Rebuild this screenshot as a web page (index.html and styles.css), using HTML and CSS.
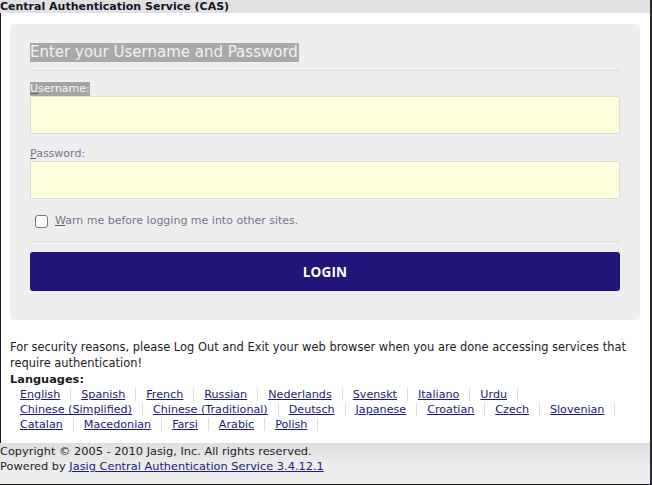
FILE: index.html
```html
<!DOCTYPE html>
<html>
<head>
<meta charset="utf-8">
<link rel="stylesheet" href="styles.css">
</head>
<body>
<div class="frame">
  <div class="header"><h1 class="title">Central Authentication Service (CAS)</h1></div>
  <div class="content">
    <form class="login-box">
      <h2 class="login-heading">Enter your Username and Password</h2>
      <div class="row">
        <label class="lbl lbl-hl" for="username"><span class="ak">U</span>sername:</label>
        <input class="field" id="username" type="text">
      </div>
      <div class="row">
        <label class="lbl" for="password"><span class="ak">P</span>assword:</label>
        <input class="field" id="password" type="password">
      </div>
      <div class="check-row">
        <input class="chk" id="warn" type="checkbox">
        <label class="lbl" for="warn"><span class="ak">W</span>arn me before logging me into other sites.</label>
      </div>
      <button class="btn" type="button">LOGIN</button>
    </form>
    <div class="info">
      <p class="notice">For security reasons, please Log Out and Exit your web browser when you are done accessing services that require authentication!</p>
      <h3 class="lang-title">Languages:</h3>
      <ul class="langs">
        <li><a href="#">English</a></li>
        <li><a href="#">Spanish</a></li>
        <li><a href="#">French</a></li>
        <li><a href="#">Russian</a></li>
        <li><a href="#">Nederlands</a></li>
        <li><a href="#">Svenskt</a></li>
        <li><a href="#">Italiano</a></li>
        <li><a href="#">Urdu</a></li>
        <li><a href="#">Chinese (Simplified)</a></li>
        <li><a href="#">Chinese (Traditional)</a></li>
        <li><a href="#">Deutsch</a></li>
        <li><a href="#">Japanese</a></li>
        <li><a href="#">Croatian</a></li>
        <li><a href="#">Czech</a></li>
        <li><a href="#">Slovenian</a></li>
        <li><a href="#">Catalan</a></li>
        <li><a href="#">Macedonian</a></li>
        <li><a href="#">Farsi</a></li>
        <li><a href="#">Arabic</a></li>
        <li><a href="#">Polish</a></li>
      </ul>
    </div>
  </div>
  <div class="footer">
    <p class="foot-line">Copyright © 2005 - 2010 Jasig, Inc. All rights reserved.</p>
    <p class="foot-line">Powered by <a href="#">Jasig Central Authentication Service 3.4.12.1</a></p>
  </div>
</div>
</body>
</html>
```
FILE: styles.css
```css
html, body {
  margin: 0;
  padding: 0;
  background: #fff;
}
body {
  font-family: "DejaVu Sans", Verdana, sans-serif;
  font-size: 11.35px;
  line-height: 16px;
  color: #1c1c24;
}
.frame {
  box-sizing: border-box;
  height: 485px;
  width: 652px;
  border-left: 1px solid #1e1a2c;
  border-right: 2px solid #2c2640;
  border-bottom: 1px solid #1e1a2c;
  display: flex;
  flex-direction: column;
}
.header {
  height: 13px;
  flex: none;
  background-color: #e6e6e6;
  background-image:
    linear-gradient(45deg, #dcdcdc 25%, transparent 25%, transparent 75%, #dcdcdc 75%),
    linear-gradient(45deg, #dcdcdc 25%, transparent 25%, transparent 75%, #dcdcdc 75%);
  background-size: 2px 2px;
  background-position: 0 0, 1px 1px;
  margin-left: -1px;
}
.title {
  margin: 0;
  font-size: 11px;
  line-height: 13px;
  font-weight: bold;
  color: #141428;
}
.content {
  flex: 1;
  padding: 11px 10px 0 9px;
}
.login-box {
  background: #eeeeee;
  border-radius: 4px;
  padding: 19px 20px 29px 20px;
  margin: 0;
}
.login-heading {
  margin: 0;
  display: inline-block;
  font-size: 15px;
  line-height: 19px;
  font-weight: normal;
  color: #f2f2f2;
  background: #a9a9a9;
  padding-right: 1px;
  vertical-align: top;
}
.row {
  display: flex;
  flex-direction: column;
  align-items: flex-start;
}
.login-box .row:first-of-type {
  border-top: 1px solid #dddddd;
  margin-top: 8px;
  padding-top: 11px;
}
.row + .row {
  margin-top: 13px;
}
.lbl {
  font-size: 11px;
  line-height: 14px;
  color: #75738e;
}
.lbl-hl {
  color: #f4f4f4;
  background: #a4a4a4;
}
.ak {
  text-decoration: underline;
  text-decoration-color: #5a5280;
}
.field {
  box-sizing: border-box;
  width: 100%;
  height: 38px;
  margin: 0;
  border: 1px solid #dcdcd0;
  border-radius: 2px;
  background: #ffffdd;
  outline: none;
}
.check-row {
  display: flex;
  align-items: center;
  gap: 7px;
  padding: 15px 0 13px 5px;
  border-bottom: 1px solid #dddddd;
  margin-bottom: 10px;
}
.chk {
  appearance: none;
  -webkit-appearance: none;
  width: 13px;
  height: 13px;
  margin: 0;
  border: 1px solid #767676;
  border-radius: 3px;
  background: #fff;
}
.btn {
  display: block;
  width: 100%;
  height: 39px;
  border: none;
  border-radius: 3px;
  background: #22157a;
  color: #ffffff;
  font-family: "Open Sans", sans-serif;
  font-weight: bold;
  font-size: 13.5px;
  letter-spacing: 0.2px;
  cursor: pointer;
}
.info {
  padding-top: 19px;
}
.notice {
  margin: 0;
  font-size: 11.45px;
}
.lang-title {
  margin: 0;
  font-size: 11.35px;
  line-height: 16px;
  font-weight: bold;
}
.langs {
  list-style: none;
  margin: 0;
  padding: 0;
  display: flex;
  flex-wrap: wrap;
}
.langs li {
  padding: 0 10px;
  border-right: 1px solid #dddddd;
  margin: 1px 0;
  line-height: 13px;
  font-size: 11.15px;
}
.langs a, .footer a {
  color: #201a78;
  text-decoration: underline;
}
.footer {
  box-sizing: border-box;
  height: 41px;
  flex: none;
  padding-top: 1px;
  margin-left: -1px;
  background: linear-gradient(#dedede, #eeeeee 60%);
}
.foot-line {
  margin: 0;
  line-height: 15px;
}
```
